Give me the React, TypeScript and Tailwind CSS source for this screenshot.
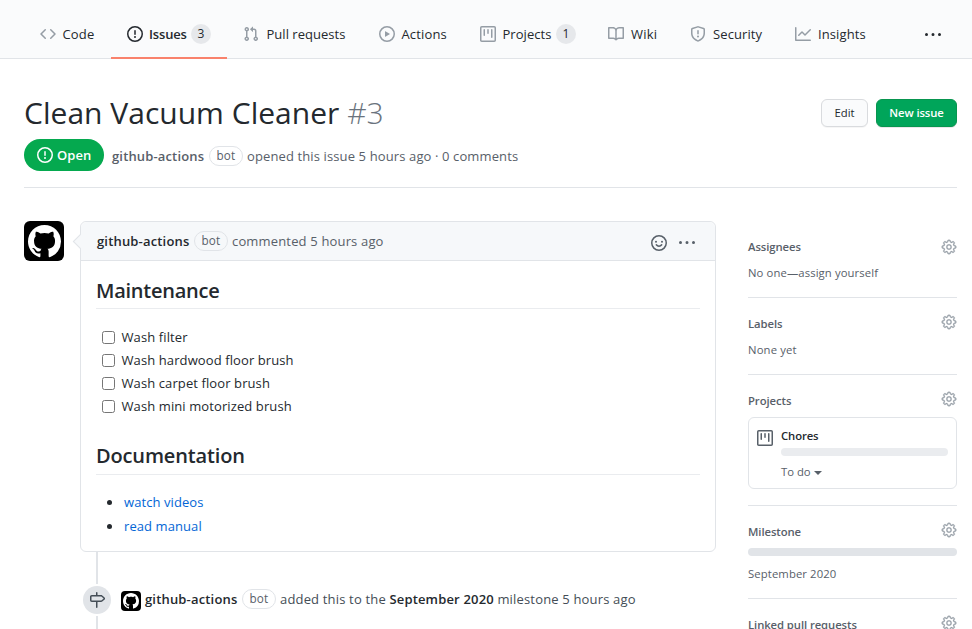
import type { ReactNode } from "react";
import { GoGear } from "react-icons/go";

const paths = {
  mark: "M8 0C3.58 0 0 3.58 0 8c0 3.54 2.29 6.53 5.47 7.59.4.07.55-.17.55-.38 0-.19-.01-.82-.01-1.49-2.01.37-2.53-.49-2.69-.94-.09-.23-.48-.94-.82-1.13-.28-.15-.68-.52-.01-.53.63-.01 1.08.58 1.23.82.72 1.21 1.87.87 2.33.66.07-.52.28-.87.51-1.07-1.78-.2-3.64-.89-3.64-3.95 0-.87.31-1.59.82-2.15-.08-.2-.36-1.02.08-2.12 0 0 .67-.21 2.2.82.64-.18 1.32-.27 2-.27.68 0 1.36.09 2 .27 1.53-1.04 2.2-.82 2.2-.82.44 1.1.16 1.92.08 2.12.51.56.82 1.27.82 2.15 0 3.07-1.87 3.75-3.65 3.95.29.25.54.73.54 1.48 0 1.07-.01 1.93-.01 2.2 0 .21.15.46.55.38A8.013 8.013 0 0016 8c0-4.42-3.58-8-8-8z",
  code: "M4.72 3.22a.75.75 0 011.06 1.06L2.06 8l3.72 3.72a.75.75 0 11-1.06 1.06L.47 8.53a.75.75 0 010-1.06l4.25-4.25zm6.56 0a.75.75 0 10-1.06 1.06L13.94 8l-3.72 3.72a.75.75 0 101.06 1.06l4.25-4.25a.75.75 0 000-1.06l-4.25-4.25z",
  issue: "M8 1.5a6.5 6.5 0 100 13 6.5 6.5 0 000-13zM0 8a8 8 0 1116 0A8 8 0 010 8zm9 3a1 1 0 11-2 0 1 1 0 012 0zm-.25-6.25a.75.75 0 00-1.5 0v3.5a.75.75 0 001.5 0v-3.5z",
  pull: "M7.177 3.073L9.573.677A.25.25 0 0110 .854v4.792a.25.25 0 01-.427.177L7.177 3.427a.25.25 0 010-.354zM3.75 2.5a.75.75 0 100 1.5.75.75 0 000-1.5zm-2.25.75a2.25 2.25 0 113 2.122v5.256a2.251 2.251 0 11-1.5 0V5.372A2.25 2.25 0 011.5 3.25zM11 2.5h-1V4h1a1 1 0 011 1v5.628a2.251 2.251 0 101.5 0V5A2.5 2.5 0 0011 2.5zm1 10.25a.75.75 0 111.5 0 .75.75 0 01-1.5 0zM3.75 12a.75.75 0 100 1.5.75.75 0 000-1.5z",
  play: "M1.5 8a6.5 6.5 0 1113 0 6.5 6.5 0 01-13 0zM8 0a8 8 0 100 16A8 8 0 008 0zM6.379 5.227A.25.25 0 006 5.442v5.117a.25.25 0 00.379.214l4.264-2.559a.25.25 0 000-.428L6.379 5.227z",
  project: "M1.75 0A1.75 1.75 0 000 1.75v12.5C0 15.216.784 16 1.75 16h12.5A1.75 1.75 0 0016 14.25V1.75A1.75 1.75 0 0014.25 0H1.75zM1.5 1.75a.25.25 0 01.25-.25h12.5a.25.25 0 01.25.25v12.5a.25.25 0 01-.25.25H1.75a.25.25 0 01-.25-.25V1.75zM11.75 3a.75.75 0 00-.75.75v7.5a.75.75 0 001.5 0v-7.5a.75.75 0 00-.75-.75zm-8.25.75a.75.75 0 011.5 0v5.5a.75.75 0 01-1.5 0v-5.5zM8 3a.75.75 0 00-.75.75v3.5a.75.75 0 001.5 0v-3.5A.75.75 0 008 3z",
  book: "M0 1.75A.75.75 0 01.75 1h4.253c1.227 0 2.317.59 3 1.501A3.744 3.744 0 0111.006 1h4.245a.75.75 0 01.75.75v10.5a.75.75 0 01-.75.75h-4.507a2.25 2.25 0 00-1.591.659l-.622.621a.75.75 0 01-1.06 0l-.622-.621A2.25 2.25 0 005.258 13H.75a.75.75 0 01-.75-.75V1.75zm8.755 3a2.25 2.25 0 012.25-2.25H14.5v9h-3.757c-.71 0-1.4.201-1.992.572l.004-7.322zm-1.504 7.324l.004-5.073-.002-2.253A2.25 2.25 0 005.003 2.5H1.5v9h3.757a3.75 3.75 0 011.994.574z",
  shield: "M7.467.133a1.75 1.75 0 011.066 0l5.25 1.68A1.75 1.75 0 0115 3.48V7c0 1.566-.32 3.182-1.303 4.682-.983 1.498-2.585 2.813-5.032 3.855a1.7 1.7 0 01-1.33 0c-2.447-1.042-4.049-2.357-5.032-3.855C1.32 10.182 1 8.566 1 7V3.48a1.75 1.75 0 011.217-1.667l5.25-1.68zm.61 1.429a.25.25 0 00-.153 0l-5.25 1.68a.25.25 0 00-.174.238V7c0 1.358.275 2.666 1.057 3.86.784 1.194 2.121 2.34 4.366 3.297a.2.2 0 00.154 0c2.245-.956 3.582-2.104 4.366-3.298C13.225 9.666 13.5 8.36 13.5 7V3.48a.25.25 0 00-.174-.237l-5.25-1.68zM9 10.5a1 1 0 11-2 0 1 1 0 012 0zm-.25-5.75a.75.75 0 10-1.5 0v3a.75.75 0 001.5 0v-3z",
  graph: "M1.5 1.75a.75.75 0 00-1.5 0v12.5c0 .414.336.75.75.75h14.5a.75.75 0 000-1.5H1.5V1.75zm14.28 2.53a.75.75 0 00-1.06-1.06L10 7.94 7.53 5.47a.75.75 0 00-1.06 0L3.22 8.72a.75.75 0 001.06 1.06L7 7.06l2.47 2.47a.75.75 0 001.06 0l5.25-5.25z",
  kebab: "M8 9a1.5 1.5 0 100-3 1.5 1.5 0 000 3zM1.5 9a1.5 1.5 0 100-3 1.5 1.5 0 000 3zm13 0a1.5 1.5 0 100-3 1.5 1.5 0 000 3z",
  milestone: "M7.75 0a.75.75 0 01.75.75V3h3.634c.414 0 .814.147 1.13.414l2.07 1.75a1.75 1.75 0 010 2.672l-2.07 1.75a1.75 1.75 0 01-1.13.414H8.5v5.25a.75.75 0 11-1.5 0V10H2.75A1.75 1.75 0 011 8.25v-3.5C1 3.784 1.784 3 2.75 3H7V.75A.75.75 0 017.75 0zm0 8.5h4.384a.25.25 0 00.161-.06l2.07-1.75a.25.25 0 000-.38l-2.07-1.75a.25.25 0 00-.161-.06H2.75a.25.25 0 00-.25.25v3.5c0 .138.112.25.25.25h5z",
};

function Icon({ name, size = 16, className = "" }: { name: keyof typeof paths; size?: number; className?: string }) {
  return (
    <svg viewBox="0 0 16 16" width={size} height={size} fill="currentColor" fillRule="evenodd" className={`shrink-0 ${className}`}>
      <path d={paths[name]} />
    </svg>
  );
}

function Smiley() {
  return (
    <svg viewBox="0 0 16 16" width="16" height="16" fill="none" stroke="currentColor" strokeWidth="1.5" strokeLinecap="round" className="shrink-0">
      <circle cx="8" cy="8" r="7.25" />
      <path d="M5.3 9.8c.6.8 1.5 1.4 2.7 1.4s2.1-.6 2.7-1.4" />
      <circle cx="5" cy="6.7" r="1" fill="currentColor" stroke="none" />
      <circle cx="11" cy="6.7" r="1" fill="currentColor" stroke="none" />
    </svg>
  );
}

type Tab = { label: string; icon: keyof typeof paths; width: string; tracking: string; count?: number; active?: boolean };

const tabs: Tab[] = [
  { label: "Code", icon: "code", width: "w-[87px]", tracking: "tracking-[0.15px]" },
  { label: "Issues", icon: "issue", width: "w-[116px]", tracking: "tracking-[-0.15px]", count: 3, active: true },
  { label: "Pull requests", icon: "pull", width: "w-[136px]", tracking: "tracking-[0.02px] pl-[1px]" },
  { label: "Actions", icon: "play", width: "w-[101px]", tracking: "tracking-[0.15px]" },
  { label: "Projects", icon: "project", width: "w-[128px]", tracking: "tracking-[0.05px]", count: 1 },
  { label: "Wiki", icon: "book", width: "w-[82px]", tracking: "tracking-[0.2px] pl-[0.5px]" },
  { label: "Security", icon: "shield", width: "w-[105px]", tracking: "tracking-[0.1px] pl-[0.5px]" },
  { label: "Insights", icon: "graph", width: "w-[104px]", tracking: "tracking-[0.1px] pl-[0.5px]" },
];

function BotLabel() {
  return (
    <span className="mx-1 flex h-5 w-[34px] items-center justify-center rounded-full border border-[#e1e4e8] text-[11.7px] font-medium tracking-[0.2px] text-[#586069]">
      bot
    </span>
  );
}

function SideHeading({ children, gear }: { children: ReactNode; gear: string }) {
  return (
    <div className="flex h-5 items-center justify-between">
      <h3 className="text-[11.3px] font-semibold leading-5 tracking-[-0.08px] text-[#586069]">{children}</h3>
      <GoGear size={16} strokeWidth={0.35} className={`text-[#959da5] ${gear}`} />
    </div>
  );
}

export default function App() {
  return (
    <div className="h-[629px] w-[972px] overflow-hidden whitespace-nowrap bg-white font-['Open_Sans','Noto_Sans',sans-serif] text-[13px] text-[#24292e]">
      <nav className="flex h-[59px] border-b border-[#e1e4e8] bg-[#fafbfc] pl-6">
        {tabs.map((t) => (
          <div
            key={t.label}
            className={`flex h-[59px] shrink-0 items-center pl-4 pt-[18px] ${t.width} ${t.active ? "border-b-2 border-[#f9826c] pb-[7px] font-semibold" : "pb-[9px]"}`}
          >
            <Icon name={t.icon} className={t.active ? "mr-1.5" : "mr-[6.5px] text-[#959da5]"} />
            <span className={`pt-[2px] ${t.tracking}`}>{t.label}</span>
            {t.count !== undefined && (
              <span className="ml-auto mr-4 flex size-5 items-center justify-center rounded-full bg-[#e6e8eb] text-[12px] font-medium">{t.count}</span>
            )}
          </div>
        ))}
        <Icon name="kebab" className="ml-[42px] mt-[27px]" />
      </nav>

      <header className="ml-6 mr-[15px] h-[129px] border-b border-[#e1e4e8] pt-[34px]">
        <div className="flex h-[40px] items-start justify-between">
          <h1 className="text-[30px] leading-[40px] tracking-[0.02px]">
            Clean Vacuum Cleaner <span className="font-light text-[#6a737d]">#3</span>
          </h1>
          <div className="mt-1.5 flex gap-2 text-[11.3px] font-semibold">
            <button className="h-7 w-[47px] rounded-md border border-[#d9dbde] bg-[#fafbfc] pt-px font-medium shadow-[0_1px_0_rgba(27,31,35,0.04)]">Edit</button>
            <button className="h-7 w-[81px] rounded-md border border-[#08954f] bg-[#00a55a] pt-px tracking-[-0.1px] text-white shadow-[0_1px_0_rgba(27,31,35,0.1)]">New issue</button>
          </div>
        </div>
        <div className="mt-[6px] flex h-8 items-center text-[#586069]">
          <span className="mr-2 flex h-8 w-20 items-center rounded-full bg-[#05a94f] pl-[13px] font-semibold text-white">
            <Icon name="issue" className="mr-1" />
            <span className="pt-[2px] tracking-[0.1px]">Open</span>
          </span>
          <div className="flex items-center pt-[2px]">
            <span className="w-[93px] pt-[1px] font-semibold tracking-[0.15px]">github-actions</span>
            <BotLabel />
            <span className="pt-[1px] tracking-[0.12px]">opened this issue 5 hours ago · 0 comments</span>
          </div>
        </div>
      </header>

      <div className="flex pl-6">
        <main className="w-[692px]">
          <div className="flex pt-[33px]">
            <div className="mr-4 flex size-10 items-center justify-center rounded-md bg-black text-white">
              <Icon name="mark" size={33} />
            </div>
            <article className="relative h-[331px] w-[636px] rounded-md border border-[#e1e4e8]">
              <span className="absolute -left-[6px] top-[14px] size-[11px] rotate-45 border-b border-l border-[#e1e4e8] bg-[#f6f8fa]" />
              <div className="relative flex h-[39px] items-center rounded-t-md border-b border-[#e1e4e8] bg-[#f6f8fa] pl-4 pr-5 text-[#586069]">
                <span className="w-[93px] pt-[2px] font-semibold tracking-[0.17px] text-[#24292e]">github-actions</span>
                <BotLabel />
                <span className="pt-[2px] tracking-[0.16px]">commented 5 hours ago</span>
                <span className="ml-auto mt-[3px] flex gap-3">
                  <Smiley />
                  <Icon name="kebab" />
                </span>
              </div>
              <div className="px-[15px] pt-[14px]">
                <h2 className="h-[34px] border-b border-[#eaecef] text-[20px] font-semibold leading-[32px] tracking-[-0.25px]">Maintenance</h2>
                <ul className="pl-[6px] pt-[17px] tracking-[0.1px]">
                  {["Wash filter", "Wash hardwood floor brush", "Wash carpet floor brush", "Wash mini motorized brush"].map((t) => (
                    <li key={t} className="flex h-[23px] items-center">
                      <span className="mr-[6.5px] size-[13px] rounded-[2.5px] border border-[#767676] bg-white" />
                      {t}
                    </li>
                  ))}
                </ul>
                <h2 className="mt-[21px] h-[36px] border-b border-[#eaecef] text-[20px] font-semibold leading-[34px] tracking-[-0.15px]">Documentation</h2>
                <ul className="pt-4 tracking-[0.08px]">
                  {["watch videos", "read manual"].map((t) => (
                    <li key={t} className="flex h-6 items-center text-[#0366d6]">
                      <span className="-mt-px ml-[11px] mr-3 size-[5px] rounded-full bg-[#24292e]" />
                      {t}
                    </li>
                  ))}
                </ul>
              </div>
            </article>
          </div>

          <div className="ml-[72px] h-8 w-0.5 bg-[#e1e4e8]" />
          <div className="flex h-8 items-center pl-[59px]">
            <span className="mr-[10px] flex size-7 items-center justify-center rounded-full bg-[#e1e4e8] text-[#444d56]">
              <Icon name="milestone" />
            </span>
            <span className="mr-[4px] mt-0.5 flex size-5 items-center justify-center rounded-[4px] bg-black text-white">
              <Icon name="mark" />
            </span>
            <span className="w-[93px] font-semibold tracking-[0.17px]">github-actions</span>
            <div className="-mt-[2px]"><BotLabel /></div>
            <span className="tracking-[0.17px] text-[#444d56]">
              added this to the <b className="font-semibold text-[#24292e]">September 2020</b> milestone 5 hours ago
            </span>
          </div>
          <div className="ml-[72px] h-8 w-0.5 bg-[#e1e4e8]" />
        </main>

        <aside className="ml-8 w-[209px] pt-[49px] text-[11.3px] text-[#586069]">
          <section className="h-[61px] border-b border-[#e1e4e8]">
            <SideHeading gear="">Assignees</SideHeading>
            <p className="mt-[6px] leading-5 tracking-[0.1px]">No one—assign yourself</p>
          </section>
          <section className="h-[77px] border-b border-[#e1e4e8] pt-4">
            <SideHeading gear="-mt-1">Labels</SideHeading>
            <p className="mt-[6px] leading-5 tracking-[0.15px]">None yet</p>
          </section>
          <section className="h-[131px] border-b border-[#e1e4e8] pt-4">
            <SideHeading gear="-mt-1">Projects</SideHeading>
            <div className="mt-[6px] flex h-[72px] rounded-md border border-[#e1e4e8] pl-2 pr-2 pt-2">
              <Icon name="project" className="mr-2 mt-1" />
              <div className="flex-1">
                <p className="font-semibold leading-5 tracking-[-0.1px] text-[#24292e]">Chores</p>
                <div className="mt-[2px] h-2 rounded-full bg-[#eaecef]" />
                <p className="mt-[6px] flex items-center leading-5">
                  To do
                  <span className="ml-[3px] mt-0.5 border-x-4 border-t-4 border-x-transparent border-t-[#586069]" />
                </p>
              </div>
            </div>
          </section>
          <section className="h-[93px] border-b border-[#e1e4e8] pt-4">
            <SideHeading gear="-mt-1">Milestone</SideHeading>
            <div className="mt-[6px] h-2 rounded-full bg-[#e1e4e8]" />
            <p className="mt-2 font-medium leading-5 tracking-[0.1px]">September 2020</p>
          </section>
          <section className="pt-4">
            <SideHeading gear="-mt-1">Linked pull requests</SideHeading>
          </section>
        </aside>
      </div>
    </div>
  );
}
